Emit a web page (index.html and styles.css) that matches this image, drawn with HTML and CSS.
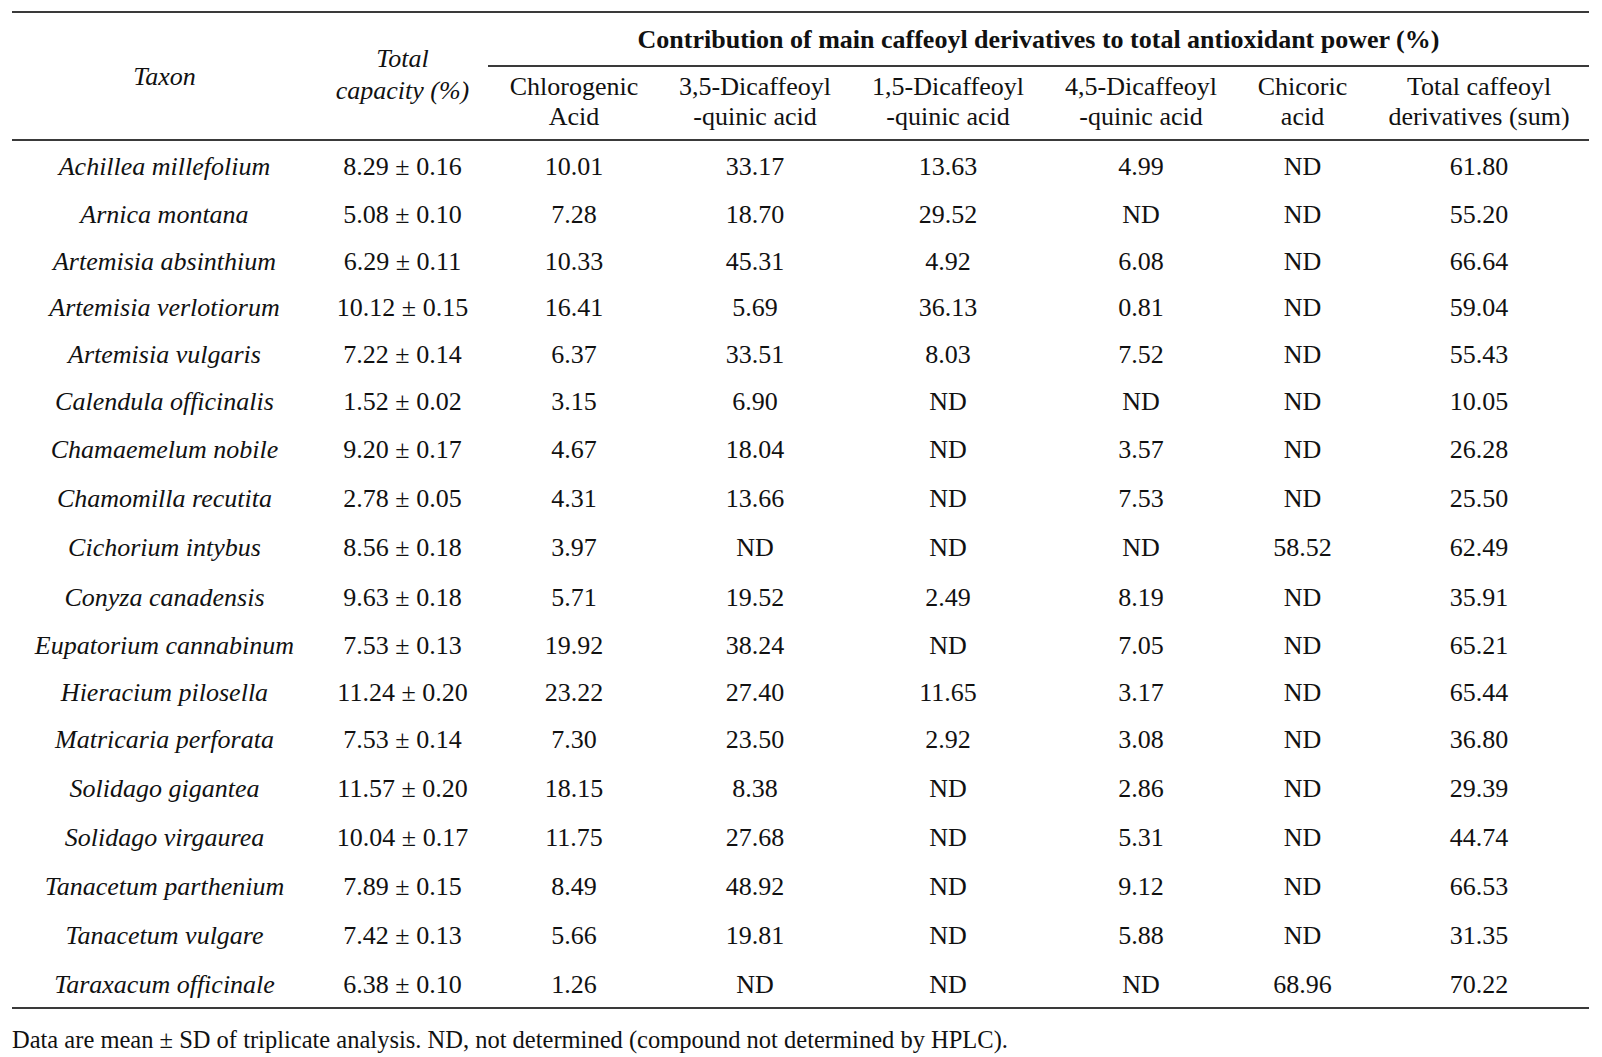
FILE: index.html
```html
<!DOCTYPE html>
<html>
<head>
<meta charset="utf-8">
<link rel="stylesheet" href="styles.css">
</head>
<body>
<div class="page">
<table class="data">
<colgroup>
<col class="c-taxon"><col class="c-total"><col class="c-chl"><col class="c-35"><col class="c-15"><col class="c-45"><col class="c-chi"><col class="c-sum">
</colgroup>
<thead>
<tr class="h1">
<th rowspan="2" class="it">Taxon</th>
<th rowspan="2" class="it cap">Total<br>capacity (%)</th>
<th colspan="6" class="group">Contribution of main caffeoyl derivatives to total antioxidant power (%)</th>
</tr>
<tr class="h2">
<th class="sub">Chlorogenic<br>Acid</th>
<th class="sub">3,5-Dicaffeoyl<br>-quinic acid</th>
<th class="sub">1,5-Dicaffeoyl<br>-quinic acid</th>
<th class="sub">4,5-Dicaffeoyl<br>-quinic acid</th>
<th class="sub">Chicoric<br>acid</th>
<th class="sub">Total caffeoyl<br>derivatives (sum)</th>
</tr>
</thead>
<tbody>
<tr><td class="it">Achillea millefolium</td><td>8.29 ± 0.16</td><td>10.01</td><td>33.17</td><td>13.63</td><td>4.99</td><td>ND</td><td>61.80</td></tr>
<tr><td class="it">Arnica montana</td><td>5.08 ± 0.10</td><td>7.28</td><td>18.70</td><td>29.52</td><td>ND</td><td>ND</td><td>55.20</td></tr>
<tr><td class="it">Artemisia absinthium</td><td>6.29 ± 0.11</td><td>10.33</td><td>45.31</td><td>4.92</td><td>6.08</td><td>ND</td><td>66.64</td></tr>
<tr><td class="it">Artemisia verlotiorum</td><td>10.12 ± 0.15</td><td>16.41</td><td>5.69</td><td>36.13</td><td>0.81</td><td>ND</td><td>59.04</td></tr>
<tr><td class="it">Artemisia vulgaris</td><td>7.22 ± 0.14</td><td>6.37</td><td>33.51</td><td>8.03</td><td>7.52</td><td>ND</td><td>55.43</td></tr>
<tr><td class="it">Calendula officinalis</td><td>1.52 ± 0.02</td><td>3.15</td><td>6.90</td><td>ND</td><td>ND</td><td>ND</td><td>10.05</td></tr>
<tr><td class="it">Chamaemelum nobile</td><td>9.20 ± 0.17</td><td>4.67</td><td>18.04</td><td>ND</td><td>3.57</td><td>ND</td><td>26.28</td></tr>
<tr><td class="it">Chamomilla recutita</td><td>2.78 ± 0.05</td><td>4.31</td><td>13.66</td><td>ND</td><td>7.53</td><td>ND</td><td>25.50</td></tr>
<tr><td class="it">Cichorium intybus</td><td>8.56 ± 0.18</td><td>3.97</td><td>ND</td><td>ND</td><td>ND</td><td>58.52</td><td>62.49</td></tr>
<tr><td class="it">Conyza canadensis</td><td>9.63 ± 0.18</td><td>5.71</td><td>19.52</td><td>2.49</td><td>8.19</td><td>ND</td><td>35.91</td></tr>
<tr><td class="it">Eupatorium cannabinum</td><td>7.53 ± 0.13</td><td>19.92</td><td>38.24</td><td>ND</td><td>7.05</td><td>ND</td><td>65.21</td></tr>
<tr><td class="it">Hieracium pilosella</td><td>11.24 ± 0.20</td><td>23.22</td><td>27.40</td><td>11.65</td><td>3.17</td><td>ND</td><td>65.44</td></tr>
<tr><td class="it">Matricaria perforata</td><td>7.53 ± 0.14</td><td>7.30</td><td>23.50</td><td>2.92</td><td>3.08</td><td>ND</td><td>36.80</td></tr>
<tr><td class="it">Solidago gigantea</td><td>11.57 ± 0.20</td><td>18.15</td><td>8.38</td><td>ND</td><td>2.86</td><td>ND</td><td>29.39</td></tr>
<tr><td class="it">Solidago virgaurea</td><td>10.04 ± 0.17</td><td>11.75</td><td>27.68</td><td>ND</td><td>5.31</td><td>ND</td><td>44.74</td></tr>
<tr><td class="it">Tanacetum parthenium</td><td>7.89 ± 0.15</td><td>8.49</td><td>48.92</td><td>ND</td><td>9.12</td><td>ND</td><td>66.53</td></tr>
<tr><td class="it">Tanacetum vulgare</td><td>7.42 ± 0.13</td><td>5.66</td><td>19.81</td><td>ND</td><td>5.88</td><td>ND</td><td>31.35</td></tr>
<tr><td class="it">Taraxacum officinale</td><td>6.38 ± 0.10</td><td>1.26</td><td>ND</td><td>ND</td><td>ND</td><td>68.96</td><td>70.22</td></tr>
</tbody>
</table>
<p class="note">Data are mean ± SD of triplicate analysis. ND, not determined (compound not determined by HPLC).</p>
</div>
</body>
</html>
```
FILE: styles.css
```css
html, body {
  margin: 0;
  padding: 0;
  background: #ffffff;
}
body {
  font-family: "Liberation Serif", "Times New Roman", serif;
  color: #111111;
}
.page {
  padding: 11px 0 0 12px;
}
.data {
  border-collapse: collapse;
  width: 1577px;
  table-layout: fixed;
  font-size: 26px;
  border-top: 2px solid #3a3a3a;
  border-bottom: 2px solid #3a3a3a;
}
.c-taxon { width: 305px; }
.c-total { width: 171px; }
.c-chl { width: 172px; }
.c-35 { width: 190px; }
.c-15 { width: 196px; }
.c-45 { width: 190px; }
.c-chi { width: 133px; }
.c-sum { width: 220px; }
.data th, .data td {
  padding: 0;
  text-align: center;
  vertical-align: middle;
  white-space: nowrap;
}
.data th {
  font-weight: normal;
  line-height: 29px;
}
.data th.group {
  font-weight: bold;
  border-bottom: 2px solid #3a3a3a;
}
.data th.sub {
  line-height: 30px;
  padding-bottom: 2px;
}
.data th.cap {
  line-height: 32px;
  padding-bottom: 2px;
}
.h1 { height: 54px; }
.h2 { height: 74px; }
.data thead tr.h2 th {
  border-bottom: 2px solid #3a3a3a;
}
.data th.it {
  border-bottom: 2px solid #3a3a3a;
}
.it { font-style: italic; }
.data td {
  line-height: 28px;
  padding-top: 3px;
}
.data tbody tr { height: 48px; }
.data tbody tr:nth-child(1) { height: 49px; }
.data tbody tr:nth-child(2) { height: 48px; }
.data tbody tr:nth-child(3) { height: 46.5px; }
.data tbody tr:nth-child(4) { height: 46.5px; }
.data tbody tr:nth-child(5) { height: 46.5px; }
.data tbody tr:nth-child(6) { height: 47px; }
.data tbody tr:nth-child(7) { height: 49px; }
.data tbody tr:nth-child(8) { height: 49px; }
.data tbody tr:nth-child(9) { height: 49.5px; }
.data tbody tr:nth-child(10) { height: 50px; }
.data tbody tr:nth-child(11) { height: 47.5px; }
.data tbody tr:nth-child(12) { height: 46.5px; }
.data tbody tr:nth-child(13) { height: 47.5px; }
.data tbody tr:nth-child(14) { height: 49px; }
.data tbody tr:nth-child(15) { height: 49px; }
.data tbody tr:nth-child(16) { height: 49px; }
.data tbody tr:nth-child(17) { height: 50px; }
.data tbody tr:nth-child(18) { height: 48.5px; }
.note {
  margin: 17px 0 0 0;
  font-size: 24.5px;
  color: #111111;
}
```
